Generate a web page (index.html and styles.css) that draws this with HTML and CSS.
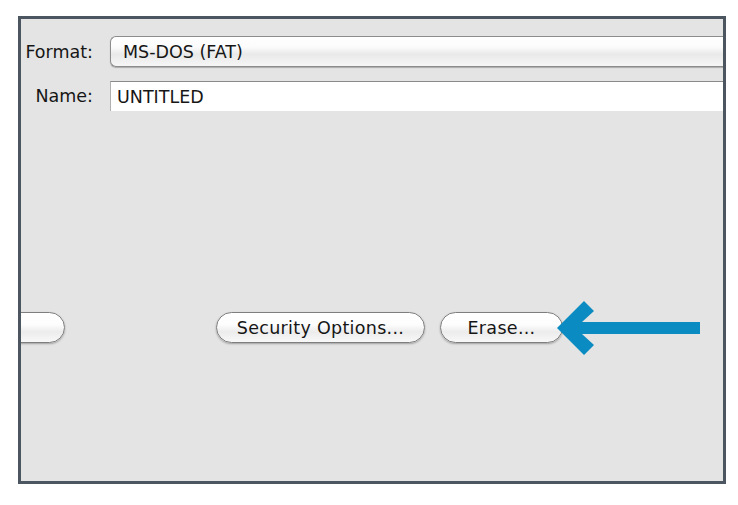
FILE: index.html
```html
<!DOCTYPE html>
<html>
<head>
<meta charset="utf-8">
<link rel="stylesheet" href="styles.css">
</head>
<body>
<div class="frame">
  <div class="form">
    <div class="row">
      <span class="label">Format:</span>
      <div class="popup">MS-DOS (FAT)</div>
    </div>
    <div class="row">
      <span class="label">Name:</span>
      <div class="field">UNTITLED</div>
    </div>
  </div>
  <div class="buttons">
    <div class="btn cut"></div>
    <div class="btn sec">Security Options...</div>
    <div class="btn erase">Erase...</div>
    <svg class="arrow" width="150" height="60" viewBox="0 0 150 60">
      <polygon points="0,27 27,0 37,10 25,21 143,21 143,33 25,33 37,44 27,54" fill="#0a8cc2"/>
    </svg>
  </div>
</div>
</body>
</html>
```
FILE: styles.css
```css
html, body {
  margin: 0;
  padding: 0;
  background: #ffffff;
}
body {
  padding: 16px 0 0 18px;
  font-family: "DejaVu Sans", "Liberation Sans", sans-serif;
  color: #161616;
}
.frame {
  box-sizing: border-box;
  width: 708px;
  height: 468px;
  border: 3px solid #4b5660;
  background: #e4e4e4;
  overflow: hidden;
  position: relative;
}
.form {
  display: flex;
  flex-direction: column;
  gap: 14px;
  padding-top: 17px;
}
.row {
  display: flex;
  align-items: center;
  gap: 17px;
}
.label {
  flex: none;
  width: 72px;
  text-align: right;
  font-size: 17.5px;
  white-space: nowrap;
}
.popup {
  box-sizing: border-box;
  width: 700px;
  height: 31px;
  flex: none;
  border: 1px solid #8c8c8c;
  border-right: none;
  border-radius: 6px 0 0 6px;
  background: linear-gradient(#ffffff 0%, #fbfbfb 35%, #e9e9e9 60%, #f6f6f6 100%);
  box-shadow: 0 1px 1px rgba(0,0,0,0.25);
  padding-left: 12px;
  display: flex;
  align-items: center;
  font-size: 17.5px;
}
.field {
  box-sizing: border-box;
  width: 700px;
  height: 30px;
  flex: none;
  border-top: 1px solid #8a8a8a;
  border-left: 1px solid #b0b0b0;
  background: #ffffff;
  padding-left: 6px;
  display: flex;
  align-items: center;
  font-size: 17.5px;
}
.buttons {
  display: flex;
  align-items: center;
  margin-top: 201px;
  position: relative;
}
.btn {
  box-sizing: border-box;
  height: 31px;
  border: 1px solid #7e7e7e;
  border-radius: 16px;
  background: linear-gradient(#ffffff 0%, #fdfdfd 40%, #ececec 65%, #f8f8f8 100%);
  box-shadow: 0 1px 2px rgba(0,0,0,0.3);
  display: flex;
  align-items: center;
  justify-content: center;
  font-size: 17.5px;
  letter-spacing: 0.3px;
  flex: none;
  white-space: nowrap;
}
.cut {
  width: 84px;
  margin-left: -40px;
}
.sec {
  width: 209px;
  margin-left: 151px;
}
.erase {
  width: 123px;
  margin-left: 15px;
}
.arrow {
  position: absolute;
  left: 536px;
  top: -11px;
}
```
